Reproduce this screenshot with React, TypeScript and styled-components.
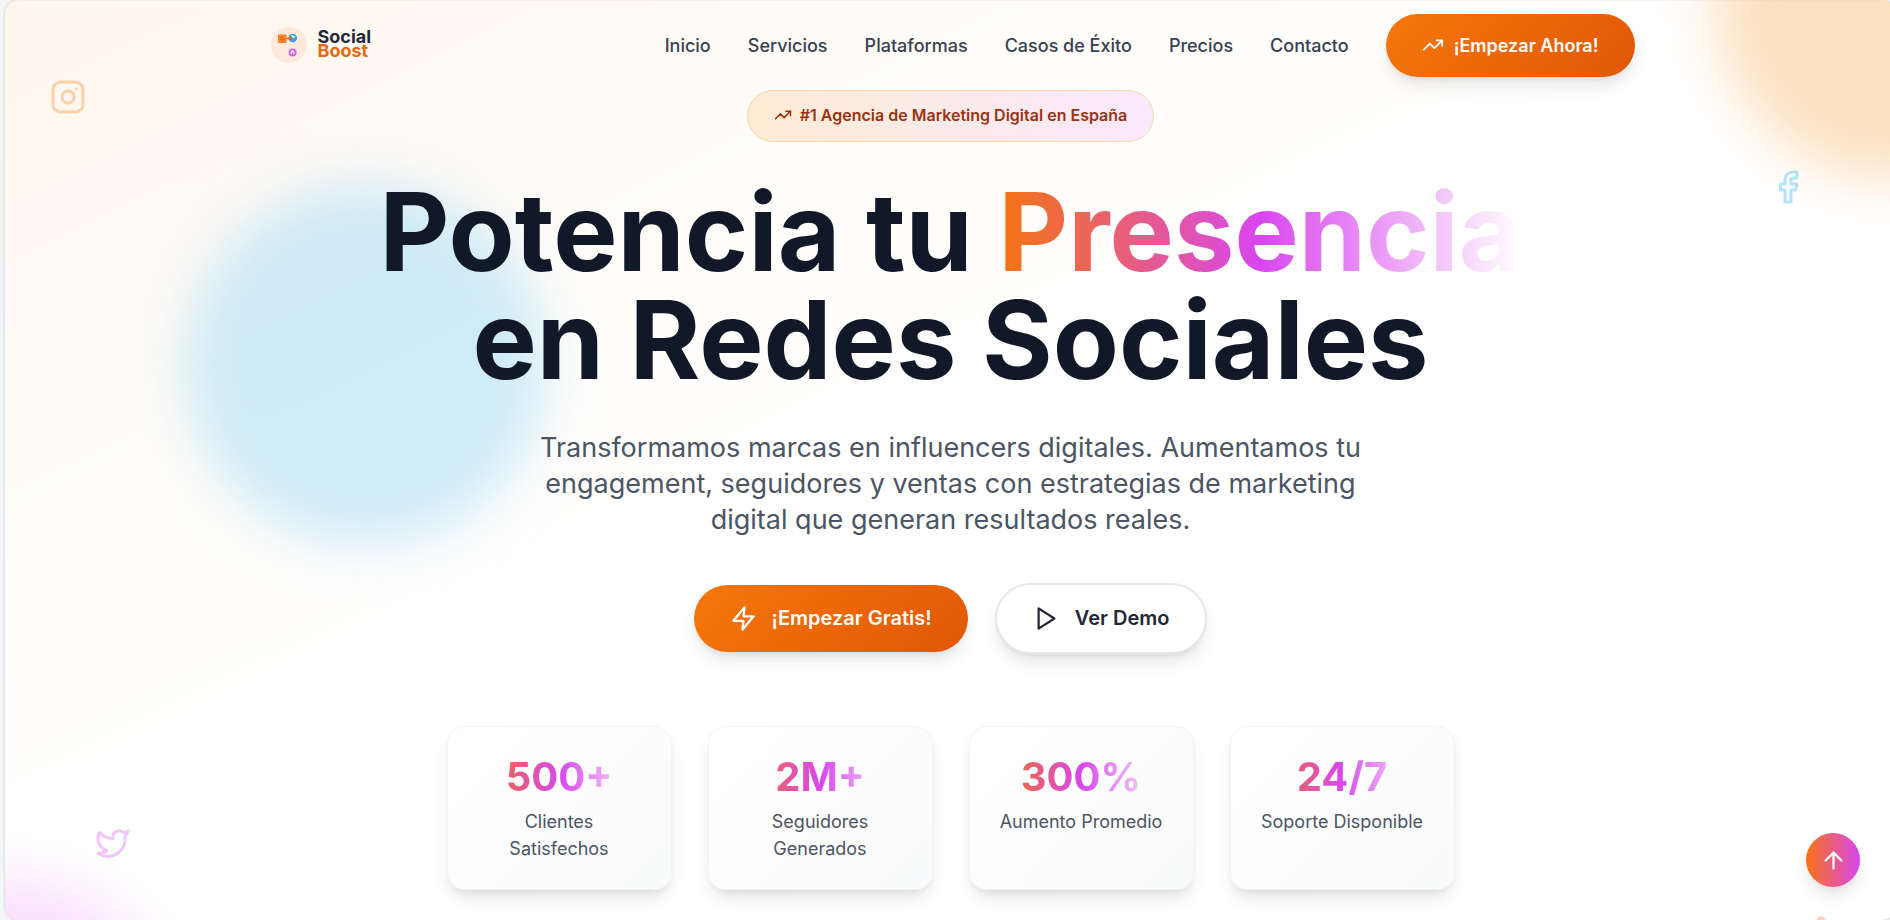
import React from "react";
import styled, { createGlobalStyle, css } from "styled-components";
import { ArrowUp, Facebook, Instagram, Linkedin, TrendingUp, Twitter } from "lucide-react";

const GlobalStyle = createGlobalStyle`
  *, *::before, *::after { box-sizing: border-box; }
  html { background: #f4f5f6; }
  body {
    margin: 0;
    overflow: hidden;
    font-family: Inter, "Liberation Sans", sans-serif;
    font-size: 18px;
    line-height: 27px;
    color: #111827;
    -webkit-font-smoothing: antialiased;
  }
  h1, p, dl, dd { margin: 0; padding: 0; }
`;

const Page = styled.div`
  position: relative;
  overflow: hidden;
  height: 100vh;
  margin: 0 -6px 0 5px;
  border-radius: 14px;
  background: linear-gradient(to bottom right, #fff7ed 0%, #fffaf5 16%, #fffdf9 30%, #fffefd 42%, #ffffff 52%);
  box-shadow: 0 0 3px rgba(0, 0, 0, 0.2), inset 0 1px rgba(0, 0, 0, 0.03);
`;

const Blob = styled.div<{ $tone: "orange" | "sky" | "fuchsia" }>`
  position: absolute;
  width: 360px;
  height: 360px;
  border-radius: 50%;
  filter: blur(27px);
  ${({ $tone }) =>
    $tone === "orange"
      ? css`top: -180px; right: -180px; background: rgba(247, 168, 75, 0.35);`
      : $tone === "sky"
        ? css`top: 20%; left: 180px; background: rgba(125, 205, 242, 0.38);`
        : css`bottom: -320px; left: -180px; background: rgba(232, 121, 249, 0.24);`}
`;

const Floating = styled.span<{ $color: string }>`
  position: absolute;
  display: block;
  line-height: 0;
  color: ${({ $color }) => $color};
`;
const InstagramSpot = styled(Floating)`top: 79px; left: 45px;`;
const FacebookSpot = styled(Floating)`top: 169px; right: 90px;`;
const TwitterSpot = styled(Floating)`bottom: 59px; left: 90px;`;
const LinkedinSpot = styled(Floating)`bottom: -31px; right: 45px;`;

const Header = styled.header`
  position: relative;
  display: flex;
  align-items: center;
  justify-content: space-between;
  max-width: 1440px;
  height: 90px;
  margin: 0 auto;
  padding: 0 36px;
`;

const Brand = styled.a`
  display: flex;
  align-items: center;
  gap: 11px;
  padding-left: 4px;
  text-decoration: none;
`;

const BrandName = styled.span`
  display: flex;
  flex-direction: column;
  padding-bottom: 3px;
  font-size: 18px;
  font-weight: 700;
  line-height: 14px;
  color: #1f2937;
`;

const BrandAccent = styled.span`
  color: #ea670c;
`;

const Nav = styled.nav`
  display: flex;
  align-items: center;
  gap: 37px;
`;

const NavLink = styled.a`
  font-weight: 500;
  color: #374151;
  text-decoration: none;
`;

const Button = styled.button<{ $kind?: "solid" | "outline"; $large?: boolean }>`
  display: inline-flex;
  align-items: center;
  gap: ${({ $large }) => ($large ? 15 : 10)}px;
  padding: 18px 36px;
  border: 0;
  border-radius: 40px;
  font: inherit;
  font-weight: 600;
  font-size: ${({ $large }) => ($large ? 20 : 18)}px;
  line-height: ${({ $large }) => ($large ? 31 : 27)}px;
  color: #ffffff;
  background: linear-gradient(135deg, #f5780b 0%, #e15604 100%);
  box-shadow: 0 11px 17px -3px rgba(0, 0, 0, 0.1), 0 4px 7px -4px rgba(0, 0, 0, 0.1);
  cursor: pointer;
  ${({ $kind }) =>
    $kind === "outline" &&
    css`
      color: #1f2937;
      background: #ffffff;
      border: 2px solid #e5e7eb;
    `}
`;

const Hero = styled.main`
  position: relative;
  display: flex;
  flex-direction: column;
  align-items: center;
  padding: 0 36px;
  text-align: center;
`;

const Badge = styled.div`
  display: flex;
  align-items: center;
  gap: 8px;
  padding: 12px 26px 14px;
  border: 1px solid #fcd9a8;
  border-radius: 27px;
  font-size: 16px;
  font-weight: 600;
  line-height: 24px;
  color: #9a3412;
  background: linear-gradient(90deg, #fdecd3, #fae8ff);
`;

const gradientText = css`
  color: transparent;
  background: linear-gradient(90deg, #f4750f 0%, #d946ef 50%, rgba(217, 70, 239, 0) 100%);
  background-clip: text;
  -webkit-background-clip: text;
`;

const Title = styled.h1`
  margin-top: 36px;
  font-size: 108px;
  font-weight: 700;
  line-height: 108px;
`;

const Highlight = styled.span`
  ${gradientText}
`;

const Lead = styled.p`
  max-width: 864px;
  margin-top: 36px;
  font-size: 27px;
  line-height: 36px;
  color: #4b5563;
`;

const Actions = styled.div`
  display: flex;
  align-items: center;
  gap: 27px;
  margin-top: 45px;
`;

const Stats = styled.dl`
  display: grid;
  grid-template-columns: repeat(4, 1fr);
  gap: 36px;
  width: 100%;
  max-width: 1008px;
  margin-top: 72px;
`;

const StatCard = styled.div`
  display: flex;
  flex-direction: column-reverse;
  justify-content: flex-end;
  gap: 9px;
  padding: 27px;
  border: 1px solid #f3f4f6;
  border-radius: 18px;
  background: linear-gradient(135deg, #ffffff, #f9fafb);
  box-shadow: 0 11px 17px -3px rgba(0, 0, 0, 0.1), 0 4px 7px -4px rgba(0, 0, 0, 0.1);
`;

const StatLabel = styled.dt`
  color: #4b5563;
`;

const StatValue = styled.dd`
  font-size: 40px;
  font-weight: 700;
  line-height: 45px;
  ${gradientText}
`;

const ToTop = styled.button`
  position: absolute;
  right: 36px;
  bottom: 33px;
  display: flex;
  align-items: center;
  justify-content: center;
  width: 54px;
  height: 54px;
  padding: 0;
  border: 0;
  border-radius: 50%;
  color: #ffffff;
  background: linear-gradient(90deg, #f97316, #d946ef);
  box-shadow: 0 11px 17px -3px rgba(0, 0, 0, 0.1), 0 4px 7px -4px rgba(0, 0, 0, 0.1);
  cursor: pointer;
`;

const LogoMark = () => (
  <svg width="36" height="36" viewBox="0 0 36 36" aria-hidden="true">
    <circle cx="18" cy="18" r="18" fill="#fdeadb" />
    <rect x="7" y="7.500" width="8.500" height="8.500" rx="1" fill="#f3802c" />
    <circle cx="11.200" cy="11.800" r="1.600" fill="none" stroke="#c8641f" />
    <circle cx="21.800" cy="11" r="4.300" fill="#3aa3dc" />
    <path d="M20 7.800l4.500 1.700-2.500 2z" fill="#ffffff" />
    <path d="M15 11.500h5" stroke="#e8660c" strokeWidth="1.500" />
    <path d="M18.500 9.500l3 2-3 2z" fill="#e8660c" />
    <circle cx="21.600" cy="25.500" r="3.100" fill="#ffffff" stroke="#d65be6" strokeWidth="1.800" />
    <path d="M21.500 28.500v-2.500h2.500" fill="none" stroke="#d65be6" />
  </svg>
);

const OutlineIcon = ({ points }: { points: string }) => (
  <svg
    width="27"
    height="27"
    viewBox="0 0 24 24"
    fill="none"
    stroke="currentColor"
    strokeWidth="2"
    strokeLinecap="round"
    strokeLinejoin="round"
    aria-hidden="true"
  >
    <polygon points={points} />
  </svg>
);

const links = [
  ["Inicio", "#inicio"],
  ["Servicios", "#servicios"],
  ["Plataformas", "#plataformas"],
  ["Casos de Éxito", "#casos"],
  ["Precios", "#precios"],
  ["Contacto", "#contacto"],
];

const stats = [
  ["500+", "Clientes Satisfechos"],
  ["2M+", "Seguidores Generados"],
  ["300%", "Aumento Promedio"],
  ["24/7", "Soporte Disponible"],
];

export default function App() {
  return (
    <>
      <GlobalStyle />
      <Page>
        <Blob $tone="orange" />
        <Blob $tone="sky" />
        <Blob $tone="fuchsia" />
        <InstagramSpot $color="#fcd0a8"><Instagram size={36} /></InstagramSpot>
        <FacebookSpot $color="#b3e3f8"><Facebook size={36} /></FacebookSpot>
        <TwitterSpot $color="#f3c6fb"><Twitter size={36} /></TwitterSpot>
        <LinkedinSpot $color="#fdcfb4"><Linkedin size={36} /></LinkedinSpot>

        <Header>
          <Brand href="#inicio">
            <LogoMark />
            <BrandName>
              Social
              <BrandAccent>Boost</BrandAccent>
            </BrandName>
          </Brand>
          <Nav>
            {links.map(([label, href]) => (
              <NavLink key={href} href={href}>{label}</NavLink>
            ))}
            <Button type="button">
              <TrendingUp size={22} />
              ¡Empezar Ahora!
            </Button>
          </Nav>
        </Header>

        <Hero>
          <Badge>
            <TrendingUp size={18} />
            #1 Agencia de Marketing Digital en España
          </Badge>
          <Title>
            Potencia tu <Highlight>Presencia</Highlight>
            <br />
            en Redes Sociales
          </Title>
          <Lead>
            Transformamos marcas en influencers digitales. Aumentamos tu engagement, seguidores y
            ventas con estrategias de marketing digital que generan resultados reales.
          </Lead>
          <Actions>
            <Button type="button" $large>
              <OutlineIcon points="13 2 3 14 12 14 11 22 21 10 12 10 13 2" />
              ¡Empezar Gratis!
            </Button>
            <Button type="button" $large $kind="outline">
              <OutlineIcon points="5 3 19 12 5 21 5 3" />
              Ver Demo
            </Button>
          </Actions>
          <Stats>
            {stats.map(([value, label]) => (
              <StatCard key={label}>
                <StatLabel>{label}</StatLabel>
                <StatValue>{value}</StatValue>
              </StatCard>
            ))}
          </Stats>
        </Hero>

        <ToTop type="button" aria-label="Volver arriba">
          <ArrowUp size={27} />
        </ToTop>
      </Page>
    </>
  );
}
